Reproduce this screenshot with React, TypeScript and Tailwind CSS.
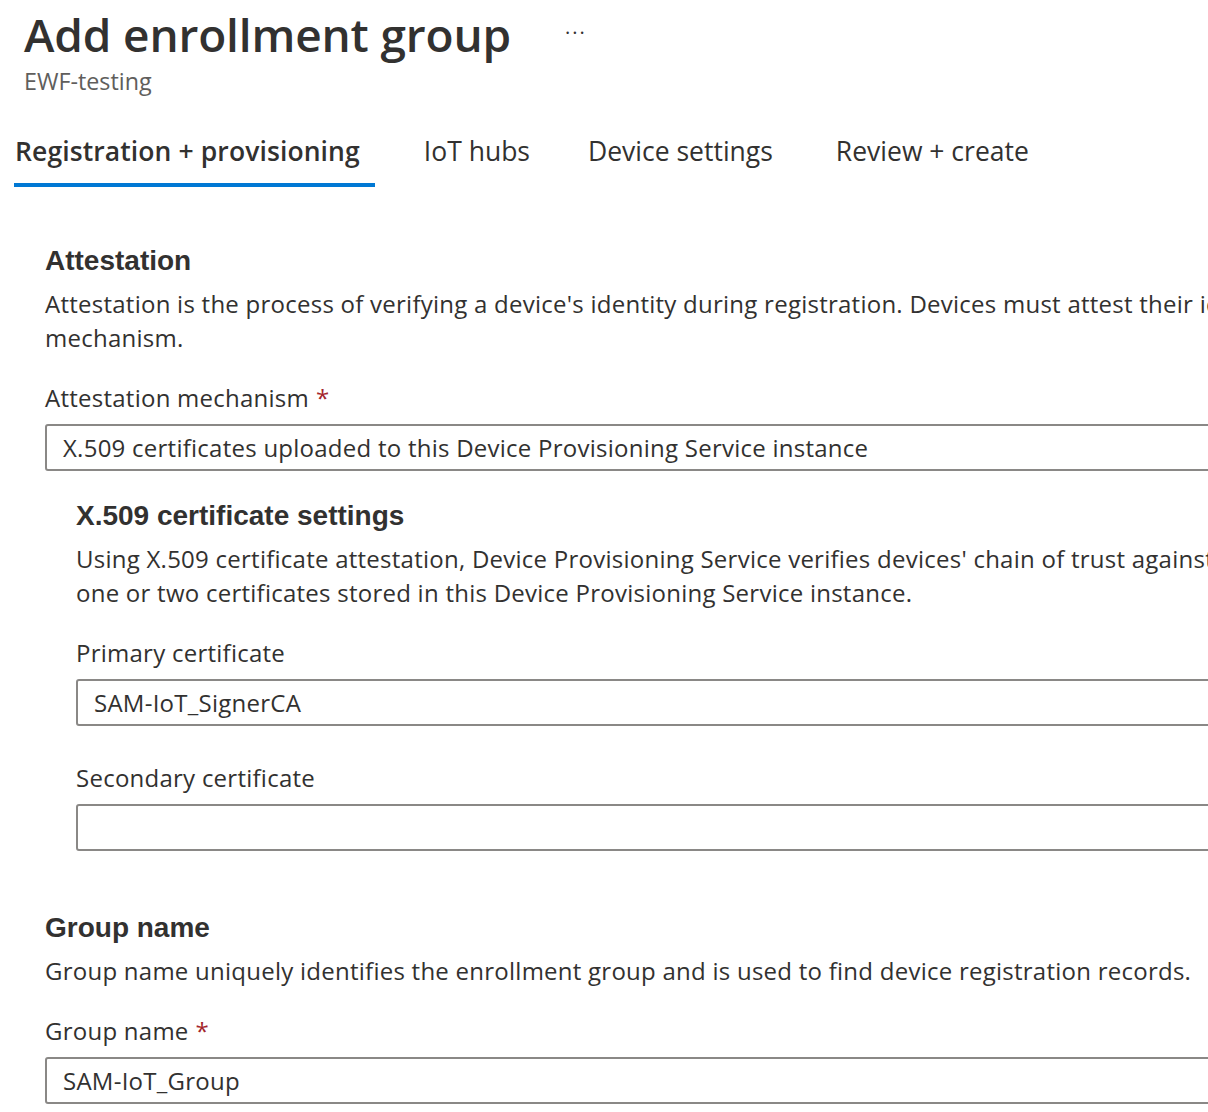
const tabs = [
  { label: "Registration + provisioning", gap: "mr-[48px]" },
  { label: "IoT hubs", gap: "mr-[57px]" },
  { label: "Device settings", gap: "mr-[62px]" },
  { label: "Review + create", gap: "mr-0" },
];

function Label({ text, required }: { text: string; required?: boolean }) {
  return (
    <div className="h-[34px] leading-[34px] text-[24px] tracking-[0.25px] text-[#323130]">
      {text}
      {required && <span className="ml-[7px] text-[#a4262c]">*</span>}
    </div>
  );
}

function Field({ value }: { value?: string }) {
  return (
    <div className="mt-[9px] h-[47px] w-[1400px] rounded-[3px] border-2 border-[#8a8886] bg-white pl-[16px] leading-[43px] text-[24px] tracking-[0.25px] text-[#323130]">
      {value}
    </div>
  );
}

function Heading({ children }: { children: React.ReactNode }) {
  return (
    <h2 className="text-[28px] font-bold leading-[34px] text-[#323130] [font-family:'Liberation_Sans',Arial,sans-serif]">
      {children}
    </h2>
  );
}

export default function App() {
  return (
    <div className="h-[1112px] w-[1208px] overflow-hidden bg-white text-[#323130] [font-family:'Open_Sans','Noto_Sans',sans-serif]">
      <header className="pl-[24px] pt-[4px]">
        <div className="flex items-center">
          <h1 className="text-[46px] font-semibold leading-[60px] tracking-[-0.15px]">Add enrollment group</h1>
          <span className="ml-[54px] mt-[-2px] text-[20px] tracking-[2px] text-[#323130]">···</span>
        </div>
        <div className="mt-[2px] text-[23.3px] leading-[30px] text-[#605e5c]">EWF-testing</div>
      </header>

      <nav className="mt-[38px] flex pl-[14px]">
        {tabs.map((t, i) => (
          <div key={t.label} className={t.gap}>
            <div
              className={`pl-[1px] text-[26.5px] leading-[34px] text-[#323130] ${
                i === 0 ? "pr-[15px] font-semibold tracking-[0.1px]" : ""
              }`}
            >
              {t.label}
            </div>
            <div className={`mt-[15px] h-[4px] ${i === 0 ? "bg-[#0078d4]" : "bg-transparent"}`} />
          </div>
        ))}
      </nav>

      <main className="pl-[45px] pt-[57px]">
        <section>
          <Heading>Attestation</Heading>
          <p className="mt-[9px] whitespace-nowrap text-[24px] leading-[34px] tracking-[0.25px]">
            Attestation is the process of verifying a device's identity during registration. Devices must attest their identity using an attestation
            <br />
            mechanism.
          </p>
          <div className="mt-[26px]">
            <Label text="Attestation mechanism" required />
            <Field value="X.509 certificates uploaded to this Device Provisioning Service instance" />
          </div>

          <div className="pl-[31px] pt-[28px]">
            <Heading>X.509 certificate settings</Heading>
            <p className="mt-[9px] whitespace-nowrap text-[24px] leading-[34px] tracking-[0.25px]">
              Using X.509 certificate attestation, Device Provisioning Service verifies devices' chain of trust against
              <br />
              one or two certificates stored in this Device Provisioning Service instance.
            </p>
            <div className="mt-[26px]">
              <Label text="Primary certificate" />
              <Field value="SAM-IoT_SignerCA" />
            </div>
            <div className="mt-[35px]">
              <Label text="Secondary certificate" />
              <Field />
            </div>
          </div>
        </section>

        <section className="mt-[60px]">
          <Heading>Group name</Heading>
          <p className="mt-[9px] whitespace-nowrap text-[24px] leading-[34px] tracking-[0.25px]">
            Group name uniquely identifies the enrollment group and is used to find device registration records.
          </p>
          <div className="mt-[26px]">
            <Label text="Group name" required />
            <Field value="SAM-IoT_Group" />
          </div>
        </section>
      </main>
    </div>
  );
}
